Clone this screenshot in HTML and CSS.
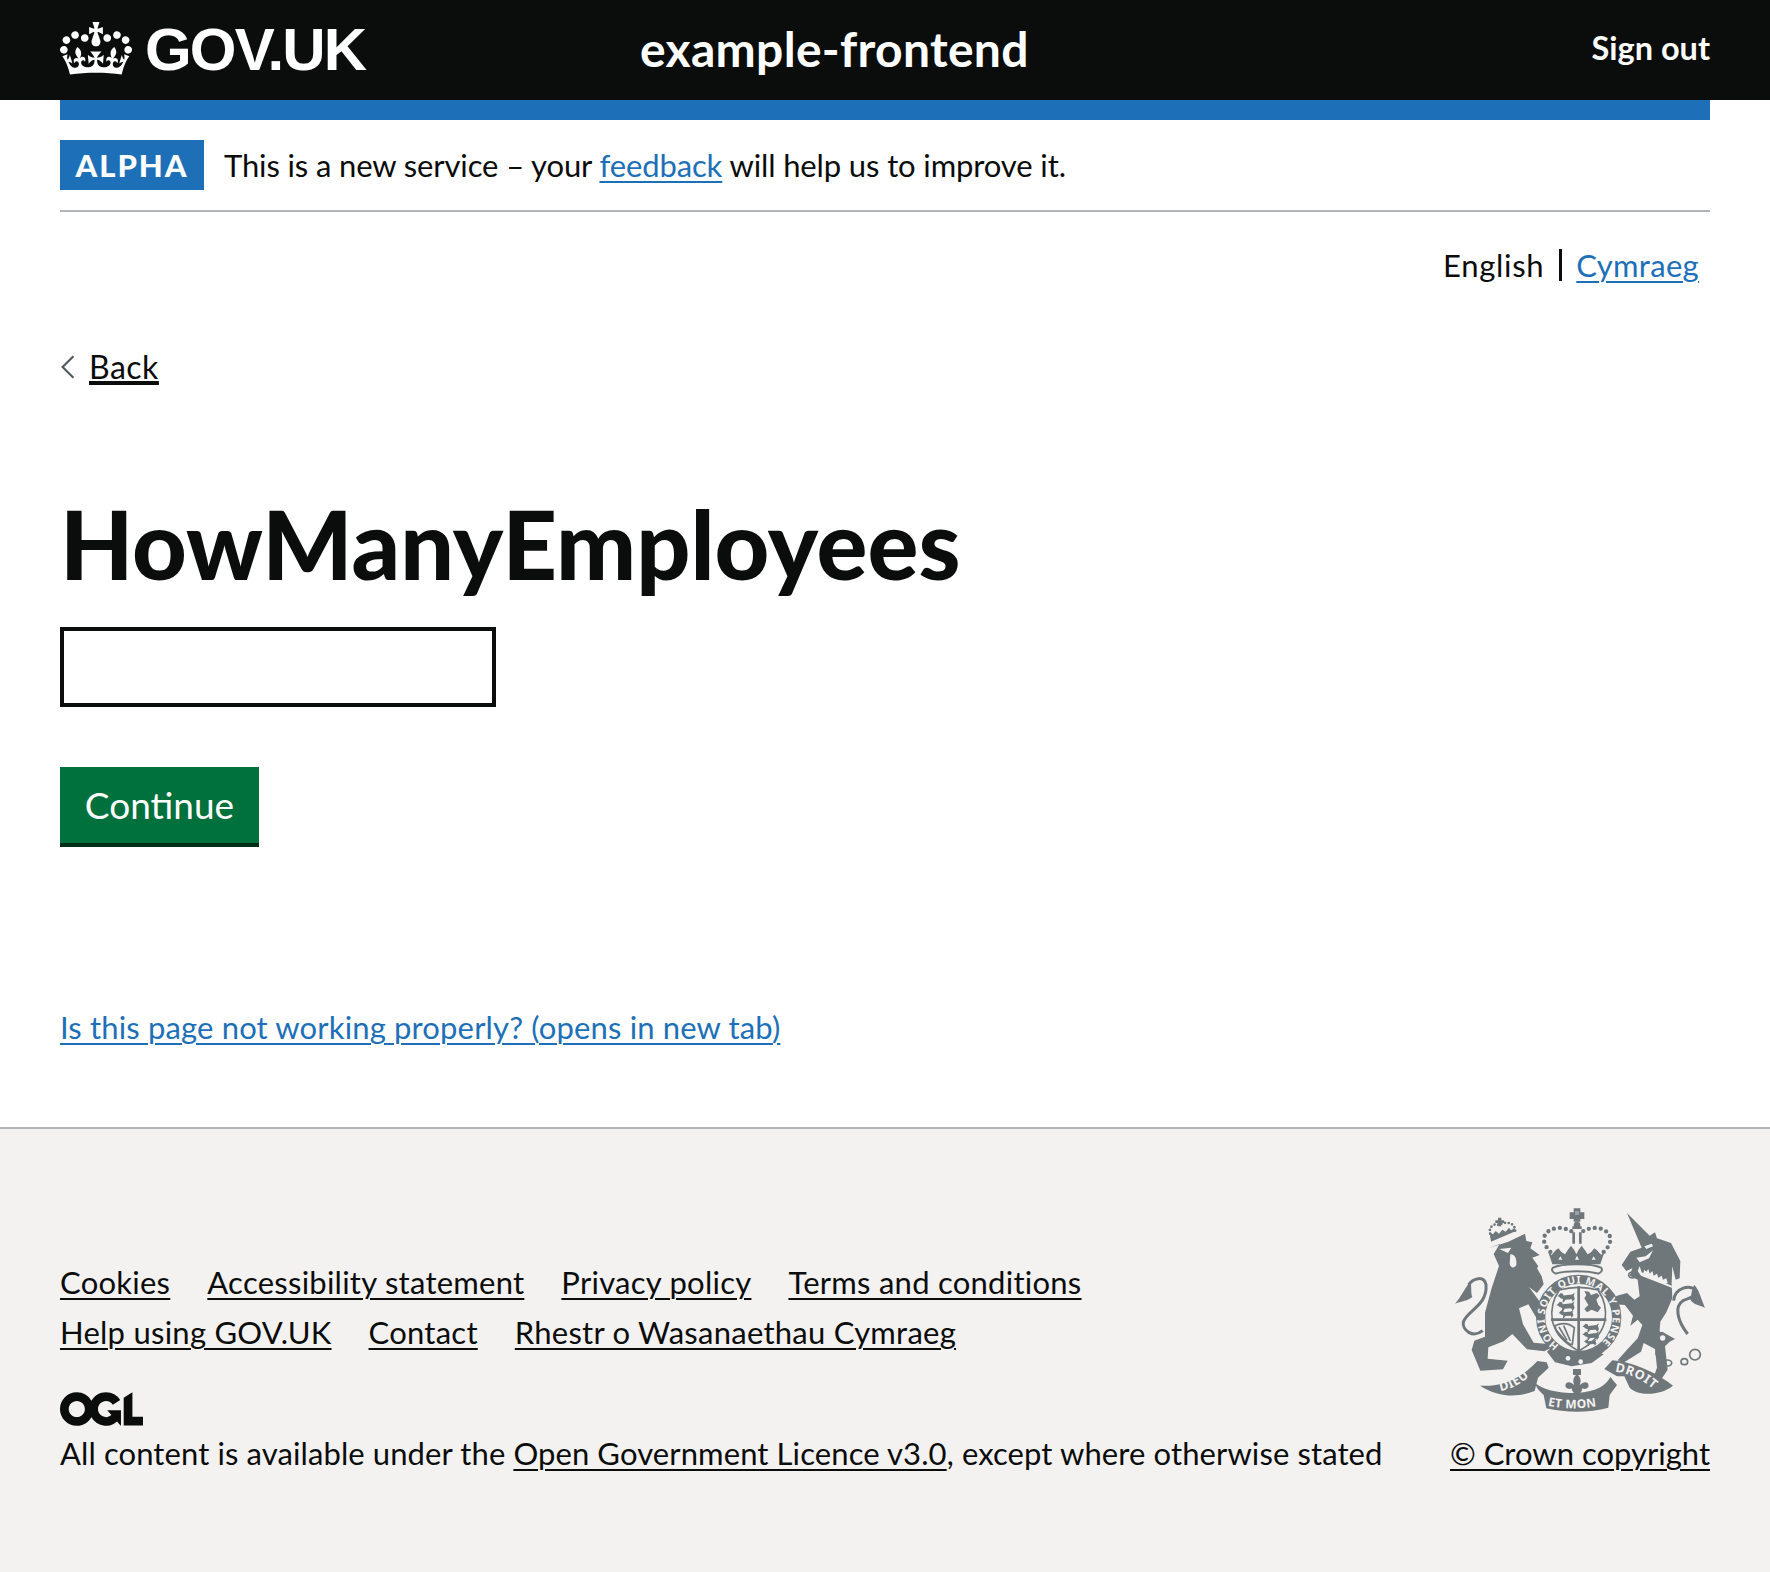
FILE: index.html
```html
<!DOCTYPE html>
<html lang="en">
<head>
<meta charset="utf-8">
<title>HowManyEmployees</title>
<link rel="stylesheet" href="styles.css">
</head>
<body>
<header class="header">
  <a class="logo" href="#">
    <svg class="crown" viewBox="0 0 132 97" aria-hidden="true"><path fill="currentColor" fill-rule="evenodd" d="M25 30.2c3.5 1.5 7.7-.2 9.1-3.7 1.5-3.6-.2-7.8-3.9-9.2-3.6-1.4-7.6.3-9.1 3.9-1.4 3.5.3 7.5 3.9 9zM9 39.5c3.6 1.5 7.8-.2 9.2-3.7 1.5-3.6-.2-7.8-3.9-9.1-3.6-1.5-7.6.2-9.1 3.8-1.4 3.5.3 7.5 3.8 9zM4.4 57.2c3.5 1.5 7.7-.2 9.1-3.8 1.5-3.6-.2-7.7-3.9-9.1-3.5-1.5-7.6.3-9.1 3.8-1.4 3.5.3 7.6 3.9 9.1zm38.3-21.4c3.5 1.5 7.7-.2 9.1-3.8 1.5-3.6-.2-7.7-3.9-9.1-3.6-1.5-7.6.3-9.1 3.8-1.3 3.6.4 7.7 3.9 9.1zm64.4-5.6c-3.6 1.5-7.8-.2-9.1-3.7-1.5-3.6.2-7.8 3.8-9.2 3.6-1.4 7.7.3 9.2 3.9 1.3 3.5-.4 7.5-3.9 9zm15.9 9.3c-3.6 1.5-7.7-.2-9.1-3.7-1.5-3.6.2-7.8 3.7-9.1 3.6-1.5 7.7.2 9.2 3.8 1.5 3.5-.3 7.5-3.8 9zm4.7 17.7c-3.6 1.5-7.8-.2-9.2-3.8-1.5-3.6.2-7.7 3.9-9.1 3.6-1.5 7.7.3 9.2 3.8 1.3 3.5-.4 7.6-3.9 9.1zM89.3 35.8c-3.6 1.5-7.8-.2-9.2-3.8-1.4-3.6.2-7.7 3.9-9.1 3.6-1.5 7.7.3 9.2 3.8 1.4 3.6-.3 7.7-3.9 9.1zM69.7 17.7l8.9 4.7V9.3l-8.9 2.8c-.2-.3-.5-.6-.9-.9L72.4 0H59.6l3.5 11.2c-.3.3-.6.5-.9.9l-8.8-2.8v13.1l8.8-4.7c.3.3.6.7.9.9l-5 15.4v.1c-.2.8-.4 1.6-.4 2.4 0 4.1 3.1 7.5 7 8.1h.2c.3 0 .7.1 1 .1.4 0 .7 0 1-.1h.2c4-.6 7.1-4.1 7.1-8.1 0-.8-.1-1.7-.4-2.4V34l-5.1-15.4c.4-.2.7-.6 1-.9zM66 92.8c16.9 0 32.8 1.1 47.1 3.2 4-16.9 8.9-26.7 14-33.5l-9.6-3.4c1 4.9 1.1 7.2 0 10.2-1.5-1.4-3-4.3-4.2-8.7L108.6 76c2.8-2 5-3.2 7.5-3.3-4.4 9.4-10 11.9-13.6 11.2-4.3-.8-6.3-4.6-5.6-7.9 1-4.7 5.7-5.9 8-.5 4.3-8.7-3-11.4-7.6-8.8 7.1-7.2 7.9-13.5 2.1-21.1-8 6.1-8.1 12.3-4.5 20.8-4.7-5.4-12.1-2.5-9.5 6.2 3.4-5.2 7.9-2 7.2 3.1-.6 4.3-6.4 7.8-13.5 7.2-10.3-.9-10.9-8-11.2-13.8 2.5-.5 7.1 1.8 11 7.3L80.2 60c-4.1 4.4-8 5.3-12.3 5.4 1.4-4.4 8-11.6 8-11.6H55.5s6.4 7.2 7.9 11.6c-4.2-.1-8-1-12.3-5.4l1.4 16.4c3.9-5.5 8.5-7.7 10.9-7.3-.3 5.8-.9 12.8-11.1 13.8-7.2.6-12.9-2.9-13.5-7.2-.7-5 3.8-8.3 7.1-3.1 2.7-8.7-4.6-11.6-9.4-6.2 3.7-8.5 3.6-14.7-4.6-20.8-5.8 7.6-5 13.9 2.2 21.1-4.7-2.6-11.9.1-7.7 8.8 2.3-5.5 7.1-4.2 8.1.5.7 3.3-1.3 7.1-5.7 7.9-3.5.7-9-1.8-13.5-11.2 2.5.1 4.7 1.3 7.5 3.3l-4.7-15.4c-1.2 4.4-2.7 7.2-4.3 8.7-1.1-3-.9-5.3 0-10.2l-9.5 3.4c5 6.9 9.9 16.7 14 33.5 14.8-2.1 30.8-3.2 47.7-3.2z"/></svg>
    <span class="wordmark">GOV.UK</span>
  </a>
  <a class="service" href="#">example-frontend</a>
  <a class="signout" href="#">Sign out</a>
</header>
<div class="width">
  <div class="bluebar"></div>
  <div class="phase">
    <strong class="tag">ALPHA</strong>
    <span class="phase-text">This is a new service – your <a class="link" href="#">feedback</a> will help us to improve it.</span>
  </div>
  <nav class="lang">
    <span class="lang-current">English</span>
    <a class="link" href="#">Cymraeg</a>
  </nav>
  <a class="back" href="#"><svg class="chevron" viewBox="0 0 14 24" aria-hidden="true"><path d="M12 2 2 12l10 10" fill="none" stroke="#505a5f" stroke-width="2"/></svg><span>Back</span></a>
  <main class="main">
    <h1 class="title">HowManyEmployees</h1>
    <input class="input" type="text" aria-label="HowManyEmployees">
    <button class="button" type="button">Continue</button>
    <a class="link report" href="#">Is this page not working properly? (opens in new tab)</a>
  </main>
</div>
<footer class="footer">
  <div class="footer-inner">
    <div class="footer-left">
      <ul class="footer-links">
        <li><a href="#">Cookies</a></li>
        <li><a href="#">Accessibility statement</a></li>
        <li><a href="#">Privacy policy</a></li>
        <li><a href="#">Terms and conditions</a></li>
        <li><a href="#">Help using GOV.UK</a></li>
        <li><a href="#">Contact</a></li>
        <li><a href="#">Rhestr o Wasanaethau Cymraeg</a></li>
      </ul>
      <svg class="ogl" viewBox="0 0 483.2 195.7" aria-hidden="true"><path fill="currentColor" d="M421.5 142.8V.1l-50.7 32.3v161.1h112.4v-50.7zm-122.3-9.6A47.12 47.12 0 0 1 221 97.8c0-26 21.1-47.1 47.1-47.1 16.7 0 31.4 8.7 39.7 21.8l42.7-27.2A97.63 97.63 0 0 0 268.1 0c-36.5 0-68.3 20.1-85.1 49.7A98 98 0 0 0 97.8 0C43.9 0 0 43.9 0 97.8s43.9 97.8 97.8 97.8c36.5 0 68.3-20.1 85.1-49.7a97.76 97.76 0 0 0 149.6 25.4l19.4 22.2h3v-87.8h-80l24.3 27.5zM97.8 145c-26 0-47.1-21.1-47.1-47.1s21.1-47.1 47.1-47.1 47.2 21 47.2 47S123.8 145 97.8 145"/></svg>
      <p class="licence">All content is available under the <a href="#">Open Government Licence v3.0</a>, except where otherwise stated</p>
    </div>
    <a class="copyright" href="#">
      <svg class="crest" viewBox="72 57 750 612" aria-hidden="true">
        <defs>
          <path id="ring-path" d="M384 469A102 102 0 1 1 502 469"/>
          <path id="m-dieu" d="M208 606Q268 596 318 538"/>
          <path id="m-mon" d="M350 650Q438 668 528 645"/>
          <path id="m-droit" d="M552 548Q620 556 678 610"/>
          <g id="pass-lion"><path d="M0 10 8 2l6 2 2 5 24-3 8-5-3 8 3 10-6 8-3-7-18 1-4 7-4 0 1-9-8-3-3-4-5 0z"/></g>
        </defs>
        <g class="crest-g">
          <!-- royal crown -->
          <path d="M428 58h20v12h12v20h-12v8h-20v-8h-12V70h12z"/>
          <path d="M432 66h12v12h-12z" class="crest-bg" opacity=".35"/>
          <circle cx="438" cy="108" r="10"/>
          <path d="M424 112h28v8h-28zM424 130h8v34h-8zM444 130h8v34h-8z"/>
          <path class="crest-dots" d="M372 200C330 170 326 130 372 118c20-4 40 2 58 14M504 200c44-30 46-70 2-82-20-4-42 2-58 14"/>
          <path d="M352 190l10 8 12-14 8-6 10 12 10 6 8-12 10-14 10 14 6 12 6-12 10-14 10 14 8 12 10-6 10-12 8 6 12 14 10-8-12 36H364z"/>
          <path class="crest-bg" d="M388 202l6 10h-12zM438 200l6 12h-12zM488 202l6 10h-12z"/>
          <path class="crown-cap" d="M366 236c26-14 118-14 144 0 6 6 2 14-8 18-30-10-100-10-128 0-10-4-14-12-8-18z"/>
          <!-- lion -->
          <path d="M172 178l60-20 50-24 4 22 18 4-6 18 28 20-22 8 18 26-4 6 14 24 6 24-20 26-24-18 44 60 14 44-36-12-24-40-28 12 12 48 32 55 44 4 12 10-24 12-52-6-44-46-26 22-46 18-2 34 60 6-14 26-68 4-26-62 8-28 32-12v-72l20-74 22-66-16-36 18-30z"/>
          <path class="crest-bg" d="M205 180l36-4-10 16zM238 196c14 0 20 14 18 32-6 12-18 8-20-4z"/>
          <path class="crest-line" stroke-width="9" d="M155 425c-30 24-62-2-58-26 10-34 74-50 68-112-6-28-38-20-52 0"/>
          <path d="M117 278c-12 14-26 44-45 66 22-8 38-8 52-20-6-14 0-32-7-46z"/>
          <!-- lion crown -->
          <path class="crest-dots crest-dots-s" d="M182 144c-16-26 6-44 22-36 16-12 52-10 48 22"/>
          <path d="M201 86h10v8h8v8h-8v10h-10v-10h-8v-8h8z"/>
          <path d="M176 130l10 6 8-10 10 8 10-12 10 6 10-12 6 8 12-8-2 12-70 30z"/>
          <!-- unicorn -->
          <path d="M588 72l68 68 16-10 6 18 42 14 28 54-2 52-12 4-10-40-2 50 2 46-18 42-18 28-2 26 46 26-16 8-14 14 8 70-24 36-24 2 16-44-6-56-34-18-8 26-54 34-16-8 30-34 30-32 14-40-14-16-22 18 8-30-24-32-58-4 34-24 30-8 22 20 16-10-6-50-24-12 8-22-18 8-14-18 26-40 34-12z"/>
          <path class="crest-bg" d="M640 172l22-8 4 8-20 8zM616 206l28-4 22-18-12 24-28 12z"/>
          <path class="crest-bg" d="M626 232l6 18 98 44 2 6-102-40-10-14z"/>
          <g class="crest-bg">
            <circle cx="718" cy="410" r="8"/><circle cx="695" cy="447" r="8"/><circle cx="690" cy="425" r="4"/><circle cx="725" cy="365" r="9"/>
          </g>
          <path class="crest-bg" d="M636 256l4-14 6 6 6-8 4 14 8-8 4 14 10-6 4 12 10-6 4 12 10-4 4 14-10 2-66-24z"/>
          <path class="crest-line" stroke-width="9" d="M728 335c4-40 50-50 68-30 12 14-20 20-40 30-26 16-18 60 14 100"/>
          <path d="M790 288c14 14 22 46 32 68-18-8-36-10-44-24 4-18 4-32 12-44z"/>
          <g class="crest-line" stroke-width="5">
            <ellipse cx="604" cy="258" rx="11" ry="9"/><ellipse cx="594" cy="342" rx="11" ry="10"/>
            <ellipse cx="686" cy="492" rx="11" ry="12"/><ellipse cx="710" cy="522" rx="12" ry="9"/><ellipse cx="760" cy="518" rx="10" ry="9"/><circle cx="792" cy="497" r="16"/>
          </g>
          <!-- garter -->
          <circle class="ring" cx="443" cy="385" r="114"/>
          <path d="M362 474c24 24 60 36 102 30l36-16 18 8-36 26-60 10-50-12-24-32z"/>
          <circle class="crest-bg" cx="411" cy="508" r="7"/><circle class="crest-bg" cx="449" cy="518" r="7"/>
          <text class="ring-text"><textPath href="#ring-path" textLength="500">HONI SOIT QUI MAL Y PENSE</textPath></text>
          <!-- shield -->
          <path class="shield" d="M385 303Q443 287 501 303 530 345 522 395 510 450 443 486 376 450 364 395 356 345 385 303z"/>
          <path d="M439 292h8v192h-8zM360 388h166v8H360z"/>
          <use href="#pass-lion" transform="translate(381 310) scale(1.05)"/>
          <use href="#pass-lion" transform="translate(378 336) scale(1.1)"/>
          <use href="#pass-lion" transform="translate(384 362) scale(.9)"/>
          <use href="#pass-lion" transform="translate(456 402)"/>
          <use href="#pass-lion" transform="translate(456 426)"/>
          <use href="#pass-lion" transform="translate(460 450) scale(.75)"/>
          <path d="M460 306l14 2 6 10 18-6 8 8-10 12 6 16 8 8-10 14-18-8-14 8-8-10 12-12-12-20 6-10z"/>
          <path class="crest-line" stroke-width="5" d="M372 410c26-12 46-4 58 6l-6 50-6 0c-22-12-44-32-46-56zM384 414l24 40M398 410l20 46M376 424l28 32"/>
          <!-- fleur de lis -->
          <path d="M426 540h24v18h-24z"/>
          <path d="M438 556c14 10 12 24 8 32 10-10 24-12 26-2 4 10-8 18-18 12 0 8-6 14-16 22-10-8-16-14-16-22-10 6-22-2-18-12 2-10 16-8 26 2-4-8-6-22 8-32z"/>
          <!-- motto -->
          <path d="M147 590c60 4 116-14 172-74l28 4 6 16-32 30-10 40c-50 20-106 20-164-16z"/>
          <path d="M312 582c6 20 20 30 26 36l8 40c60 14 130 14 186-2l4-38 22-30-20-24c-16 30-48 46-110 48-64 0-98-16-116-30z"/>
          <path d="M520 540l24-26c70 6 138 42 182 76-30 26-100 36-130 6l-16-34-22 0z"/>
          <text class="motto"><textPath href="#m-dieu">DIEU</textPath></text>
          <text class="motto motto-c"><textPath href="#m-mon">ET MON</textPath></text>
          <text class="motto"><textPath href="#m-droit">DROIT</textPath></text>
        </g>
      </svg>
      <span class="copy-text">© Crown copyright</span>
    </a>
  </div>
</footer>
</body>
</html>
```

FILE: styles.css
```css
* { box-sizing: border-box; }
html, body { margin: 0; padding: 0; }
body {
  font-family: Lato, "Noto Sans", sans-serif;
  font-size: 31px;
  line-height: 50px;
  color: #0b0c0c;
  background: #fff;
  min-height: 1572px;
  display: flex;
  flex-direction: column;
}
.link { color: #1d70b8; text-decoration: underline; text-decoration-thickness: 2px; text-underline-offset: 4px; }

.header {
  background: #0b0c0c;
  color: #fff;
  height: 100px;
  padding: 0 60px;
  display: flex;
  align-items: center;
}
.header a { color: inherit; text-decoration: none; }
.logo { display: flex; align-items: center; gap: 13px; width: 580px; }
.crown { width: 72px; height: 53px; flex: none; margin-top: -4px; }
.wordmark { font-family: "Liberation Sans", sans-serif; font-weight: 700; font-size: 60px; line-height: 60px; letter-spacing: -1.8px; }
.service { font-weight: 700; font-size: 48px; line-height: 50px; letter-spacing: .3px; flex: 1; margin-top: -2px; }
.signout { font-weight: 700; font-size: 32.5px; margin-top: -4px; }

.width { margin: 0 60px; flex: 1; }
.bluebar { height: 20px; background: #1d70b8; }
.phase {
  display: flex;
  align-items: center;
  gap: 20px;
  padding: 20px 0;
  border-bottom: 2px solid #b1b4b6;
  height: 92px;
}
.phase-text { letter-spacing: -.12px; margin-top: -1px; }
.tag {
  background: #1d70b8;
  color: #fff;
  width: 144px;
  height: 50px;
  display: flex;
  align-items: center;
  justify-content: center;
  font-size: 31px;
  letter-spacing: 2px;
  font-weight: 900;
}
.lang {
  display: flex;
  justify-content: flex-end;
  align-items: center;
  padding: 27px 11px 0 0;
  height: 78px;
  letter-spacing: .3px;
}
.lang-current { padding-right: 15px; margin-right: 14px; border-right: 3px solid #0b0c0c; line-height: 32px; letter-spacing: .7px; }
.back {
  display: inline-flex;
  align-items: center;
  gap: 13px;
  margin-top: 52px;
  color: #0b0c0c;
  font-size: 32px;
  letter-spacing: .5px;
}
.back span { text-decoration: underline; text-decoration-thickness: 2px; text-underline-offset: 4px; }
.chevron { width: 16px; height: 26px; }
.main { display: flex; flex-direction: column; align-items: flex-start; padding-top: 100px; }
.title { font-size: 95px; line-height: 100px; font-weight: 900; margin: 0 0 34px; }
.input {
  width: 436px;
  height: 80px;
  border: 4px solid #0b0c0c;
  background: #fff;
  margin: 0 0 60px;
  padding: 0;
  border-radius: 0;
}
.button {
  width: 199px;
  height: 80px;
  background: #00703c;
  color: #fff;
  border: 0;
  border-bottom: 4px solid #002d18;
  font: 37px/50px Lato, "Noto Sans", sans-serif;
  padding: 0;
  margin: 0 0 155px;
}
.report { display: block; letter-spacing: .15px; }

.footer {
  background: #f3f2f1;
  border-top: 2px solid #b1b4b6;
  height: 445px;
  padding: 0 60px;
}
.footer a { color: #0b0c0c; text-decoration: underline; text-decoration-thickness: 2px; text-underline-offset: 4px; }
.footer-inner { display: flex; justify-content: space-between; align-items: flex-end; height: 349px; }
.footer-left { min-width: 0; }
.footer-links { list-style: none; margin: 0 0 36px; padding: 0; display: flex; flex-wrap: wrap; gap: 0 37px; width: 1100px; letter-spacing: .25px; position: relative; top: 1px; }
.ogl { display: block; width: 83px; height: 34px; color: #0b0c0c; margin-bottom: 2px; }
.licence { margin: 0; white-space: nowrap; letter-spacing: .1px; }
.copyright { display: flex; flex-direction: column; align-items: flex-end; }
.crest { display: block; width: 250px; height: 204px; margin: 0 5px 16px 0; }
.crest-g { fill: #6f777b; }
.crest-bg { fill: #f3f2f1; }
.crest-line { fill: none; stroke: #6f777b; }
.crest-dots { fill: none; stroke: #6f777b; stroke-width: 13px; stroke-linecap: round; stroke-dasharray: 0 18; }
.crest-dots-s { stroke-width: 8px; stroke-dasharray: 0 11; }
.crown-cap { fill: #f3f2f1; stroke: #6f777b; stroke-width: 6px; }
.ring { fill: #f3f2f1; stroke: #6f777b; stroke-width: 28px; }
.shield { fill: #f3f2f1; stroke: #6f777b; stroke-width: 5px; }
.ring-text { fill: #f3f2f1; font: 700 31px "Noto Sans", sans-serif; }
.motto { fill: #f3f2f1; font: 700 38px "Noto Sans", sans-serif; letter-spacing: 2px; }
.motto-c { font-size: 36px; letter-spacing: 1px; }
```
